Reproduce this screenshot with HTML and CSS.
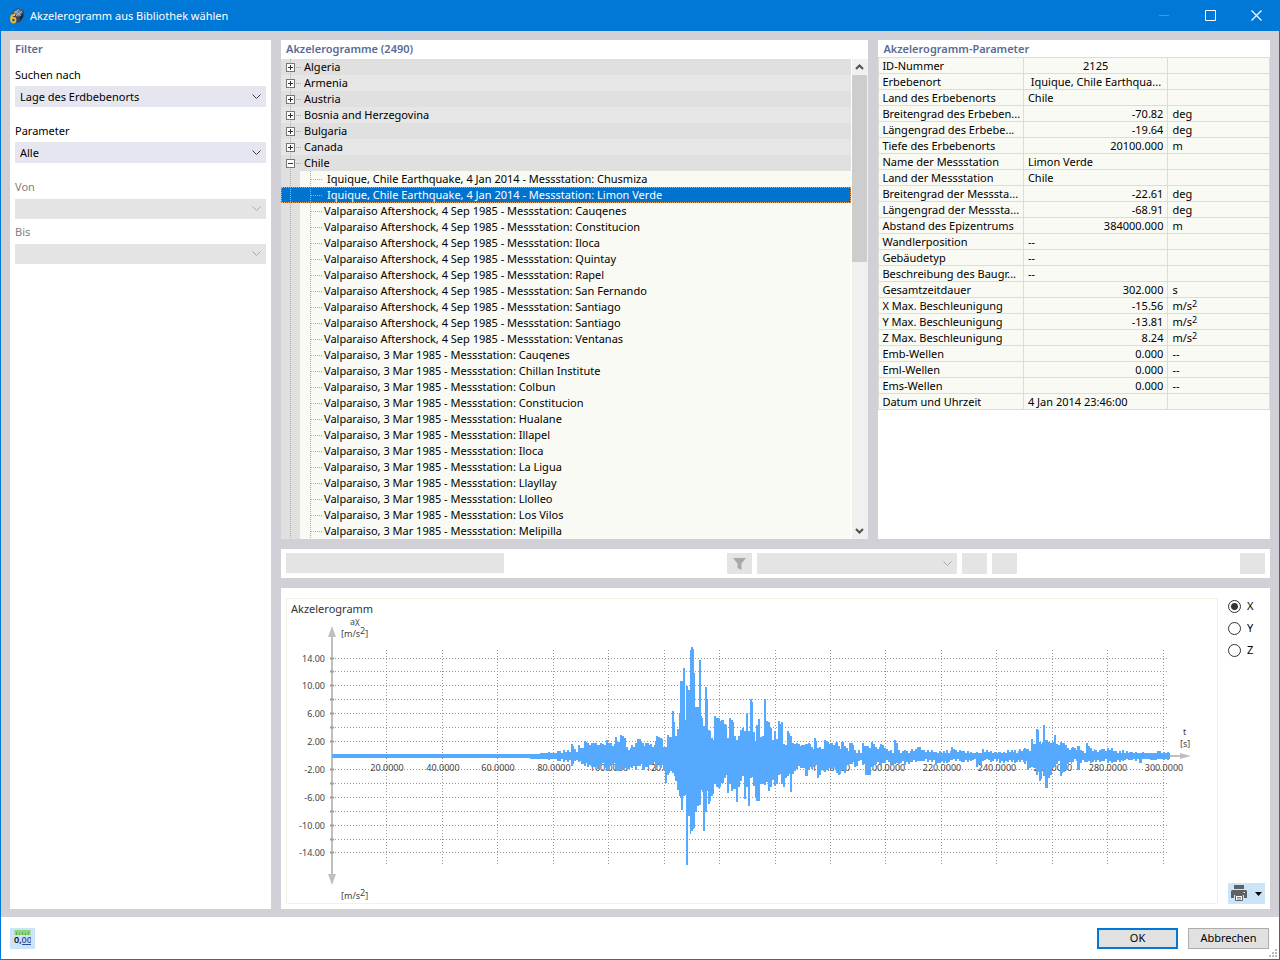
FILE: index.html
```html
<!DOCTYPE html>
<html lang="de">
<head>
<meta charset="utf-8">
<title>Akzelerogramm aus Bibliothek wählen</title>
<link rel="stylesheet" href="styles.css">
</head>
<body>
<div class="window">
  <header class="titlebar">
    <svg class="app-icon" width="16" height="16" viewBox="0 0 16 16" aria-hidden="true">
      <path d="M4 3 9 0l6 3v5l-4 6-5 1-4-5z" fill="#39445c"/>
      <path d="M4 4 9 1l5 3-5 5z" fill="#71809a"/>
      <path d="m5 6 5-5m-3 7 6-5M6 3l6 5" stroke="#b4bfd0" stroke-width=".8"/>
      <path d="M11 9l3-3v3l-3 4z" fill="#1b2436"/>
      <path d="M6 7H4.500Q2 7.500 2 11t2.500 3.500Q6.500 14.500 6.500 12T4.500 10Q3 10 2 11.500" fill="none" stroke="#f5bd2d" stroke-width="1.800"/>
    </svg>
    <h1 class="title">Akzelerogramm aus Bibliothek wählen</h1>
    <button class="win-btn" aria-label="Minimieren" disabled><svg width="11" height="11" viewBox="0 0 11 11"><path d="M0 5.500h10" stroke="#3c98e2"/></svg></button>
    <button class="win-btn" aria-label="Maximieren"><svg width="11" height="11" viewBox="0 0 11 11"><path d="M.5.5h10v10H.5z" fill="none" stroke="#fff"/></svg></button>
    <button class="win-btn" aria-label="Schließen"><svg width="11" height="11" viewBox="0 0 11 11"><path d="m.5.500 10 10m0-10-10 10" stroke="#fff" stroke-width="1.200"/></svg></button>
  </header>

  <main class="workspace">
    <section class="panel filter">
      <h2 class="panel-title">Filter</h2>
      <div class="field">
        <label for="search">Suchen nach</label>
        <select id="search" class="combo"><option>Lage des Erdbebenorts</option></select>
      </div>
      <div class="field">
        <label for="param">Parameter</label>
        <select id="param" class="combo"><option>Alle</option></select>
      </div>
      <div class="field range">
        <label for="from">Von</label>
        <select id="from" class="combo" disabled></select>
      </div>
      <div class="field range">
        <label for="to">Bis</label>
        <select id="to" class="combo" disabled></select>
      </div>
    </section>

    <div class="content">
      <div class="upper">
        <section class="panel">
          <h2 class="panel-title">Akzelerogramme (2490)</h2>
          <div class="tree-wrap">
            <ul class="tree">
              <li class="country"><button class="toggle" aria-label="Algeria öffnen"></button>Algeria</li>
              <li class="country"><button class="toggle" aria-label="Armenia öffnen"></button>Armenia</li>
              <li class="country"><button class="toggle" aria-label="Austria öffnen"></button>Austria</li>
              <li class="country"><button class="toggle" aria-label="Bosnia and Herzegovina öffnen"></button>Bosnia and Herzegovina</li>
              <li class="country"><button class="toggle" aria-label="Bulgaria öffnen"></button>Bulgaria</li>
              <li class="country"><button class="toggle" aria-label="Canada öffnen"></button>Canada</li>
              <li class="country"><button class="toggle open" aria-label="Chile schließen"></button>Chile</li>
              <li class="record new">Iquique, Chile Earthquake, 4 Jan 2014 - Messstation: Chusmiza</li>
              <li class="record new selected">Iquique, Chile Earthquake, 4 Jan 2014 - Messstation: Limon Verde</li>
              <li class="record">Valparaiso Aftershock, 4 Sep 1985 - Messstation: Cauqenes</li>
              <li class="record">Valparaiso Aftershock, 4 Sep 1985 - Messstation: Constitucion</li>
              <li class="record">Valparaiso Aftershock, 4 Sep 1985 - Messstation: Iloca</li>
              <li class="record">Valparaiso Aftershock, 4 Sep 1985 - Messstation: Quintay</li>
              <li class="record">Valparaiso Aftershock, 4 Sep 1985 - Messstation: Rapel</li>
              <li class="record">Valparaiso Aftershock, 4 Sep 1985 - Messstation: San Fernando</li>
              <li class="record">Valparaiso Aftershock, 4 Sep 1985 - Messstation: Santiago</li>
              <li class="record">Valparaiso Aftershock, 4 Sep 1985 - Messstation: Santiago</li>
              <li class="record">Valparaiso Aftershock, 4 Sep 1985 - Messstation: Ventanas</li>
              <li class="record">Valparaiso, 3 Mar 1985 - Messstation: Cauqenes</li>
              <li class="record">Valparaiso, 3 Mar 1985 - Messstation: Chillan Institute</li>
              <li class="record">Valparaiso, 3 Mar 1985 - Messstation: Colbun</li>
              <li class="record">Valparaiso, 3 Mar 1985 - Messstation: Constitucion</li>
              <li class="record">Valparaiso, 3 Mar 1985 - Messstation: Hualane</li>
              <li class="record">Valparaiso, 3 Mar 1985 - Messstation: Illapel</li>
              <li class="record">Valparaiso, 3 Mar 1985 - Messstation: Iloca</li>
              <li class="record">Valparaiso, 3 Mar 1985 - Messstation: La Ligua</li>
              <li class="record">Valparaiso, 3 Mar 1985 - Messstation: Llayllay</li>
              <li class="record">Valparaiso, 3 Mar 1985 - Messstation: Llolleo</li>
              <li class="record">Valparaiso, 3 Mar 1985 - Messstation: Los Vilos</li>
              <li class="record">Valparaiso, 3 Mar 1985 - Messstation: Melipilla</li>
            </ul>
            <div class="scrollbar">
              <button class="scroll-btn" aria-label="Nach oben"><svg width="9" height="6" viewBox="0 0 9 6"><path d="m1 5 3.500-3.500L8 5" fill="none" stroke="#505050" stroke-width="2"/></svg></button>
              <div class="thumb"></div>
              <button class="scroll-btn bottom" aria-label="Nach unten"><svg width="9" height="6" viewBox="0 0 9 6"><path d="m1 1 3.500 3.500L8 1" fill="none" stroke="#505050" stroke-width="2"/></svg></button>
            </div>
          </div>
        </section>

        <section class="panel">
          <h2 class="panel-title">Akzelerogramm-Parameter</h2>
          <table class="params">
            <colgroup><col class="c-name"><col class="c-value"><col></colgroup>
            <tbody>
            <tr><th scope="row">ID-Nummer</th><td class="center">2125</td><td></td></tr>
            <tr><th scope="row">Erbebenort</th><td>&nbsp;Iquique, Chile Earthqua...</td><td></td></tr>
            <tr><th scope="row">Land des Erbebenorts</th><td>Chile</td><td></td></tr>
            <tr><th scope="row">Breitengrad des Erbeben...</th><td class="num">-70.82</td><td>deg</td></tr>
            <tr><th scope="row">Längengrad des Erbebe...</th><td class="num">-19.64</td><td>deg</td></tr>
            <tr><th scope="row">Tiefe des Erbebenorts</th><td class="num">20100.000</td><td>m</td></tr>
            <tr><th scope="row">Name der Messstation</th><td>Limon Verde</td><td></td></tr>
            <tr><th scope="row">Land der Messstation</th><td>Chile</td><td></td></tr>
            <tr><th scope="row">Breitengrad der Messsta...</th><td class="num">-22.61</td><td>deg</td></tr>
            <tr><th scope="row">Längengrad der Messsta...</th><td class="num">-68.91</td><td>deg</td></tr>
            <tr><th scope="row">Abstand des Epizentrums</th><td class="num">384000.000</td><td>m</td></tr>
            <tr><th scope="row">Wandlerposition</th><td>--</td><td></td></tr>
            <tr><th scope="row">Gebäudetyp</th><td>--</td><td></td></tr>
            <tr><th scope="row">Beschreibung des Baugr...</th><td>--</td><td></td></tr>
            <tr><th scope="row">Gesamtzeitdauer</th><td class="num">302.000</td><td>s</td></tr>
            <tr><th scope="row">X Max. Beschleunigung</th><td class="num">-15.56</td><td>m/s<sup>2</sup></td></tr>
            <tr><th scope="row">Y Max. Beschleunigung</th><td class="num">-13.81</td><td>m/s<sup>2</sup></td></tr>
            <tr><th scope="row">Z Max. Beschleunigung</th><td class="num">8.24</td><td>m/s<sup>2</sup></td></tr>
            <tr><th scope="row">Emb-Wellen</th><td class="num">0.000</td><td>--</td></tr>
            <tr><th scope="row">Eml-Wellen</th><td class="num">0.000</td><td>--</td></tr>
            <tr><th scope="row">Ems-Wellen</th><td class="num">0.000</td><td>--</td></tr>
            <tr><th scope="row">Datum und Uhrzeit</th><td>4 Jan 2014 23:46:00</td><td></td></tr>
            </tbody>
          </table>
        </section>
      </div>

      <section class="panel toolbar">
        <div class="tool-group">
          <input class="search-box" type="text" aria-label="Suche" disabled>
          <button class="tool" aria-label="Filtern" disabled><svg width="13" height="12" viewBox="0 0 13 12"><path d="M0 0h13L8.500 5.500V12l-4-2V5.500z" fill="#a9a9a9"/></svg></button>
        </div>
        <select class="combo tool-combo" aria-label="Filterauswahl" disabled></select>
        <button class="tool" aria-label="Aktion 1" disabled></button>
        <button class="tool" aria-label="Aktion 2" disabled></button>
        <button class="tool last" aria-label="Aktion 3" disabled></button>
      </section>

      <section class="panel diagram">
        <div class="plot">
          <svg class="plot-svg" viewBox="0 0 930 304" role="img" aria-label="Akzelerogramm">
            <text class="plot-title" x="4" y="14">Akzelerogramm</text>
            <g id="grid" class="grid"></g>
            <g class="axis">
              <path d="M45 34v246M45 157h848"/>
              <path id="ticks" class="ticks"/>
              <path class="arrow" d="m45 27 4 11h-8zM45 286l4-11h-8zM904 157l-11-3v6z"/>
            </g>
            <g id="labels" class="labels"></g>
            <g class="labels">
              <text x="63" y="26">a<tspan class="small" dy="1">X</tspan></text>
              <text x="54" y="38">[m/s<tspan dy="-3">2</tspan><tspan dy="3">]</tspan></text>
              <text x="54" y="300">[m/s<tspan dy="-3">2</tspan><tspan dy="3">]</tspan></text>
              <text x="896" y="136">t</text>
              <text x="893" y="148">[s]</text>
            </g>
            <path id="wave" class="wave"/>
          </svg>
        </div>
        <div class="side">
          <div class="radios">
            <label class="radio"><input type="radio" name="axis" checked>X</label>
            <label class="radio"><input type="radio" name="axis">Y</label>
            <label class="radio"><input type="radio" name="axis">Z</label>
          </div>
          <button class="print" aria-label="Drucken">
            <svg width="16" height="17" viewBox="0 0 16 17"><path d="M3 0h10v4H3zM1 5h14l1 1v7h-3v-3H3v3H0V6z" fill="#5d6267"/><path d="M12.500 7h1.500v1h-1.500z" fill="#fff"/><path d="M4.500 10.500h7v5h-7z" fill="#fff" stroke="#5d6267"/><path d="M6 12.500h4M6 14h4" stroke="#5d6267" stroke-width=".8"/></svg>
            <svg width="7" height="4" viewBox="0 0 7 4"><path d="M0 0h7L3.500 4z"/></svg>
          </button>
        </div>
      </section>
    </div>
  </main>

  <footer class="footer">
    <button class="units" aria-label="Einheiten und Dezimalstellen">
      <svg width="17" height="16" viewBox="0 0 17 16"><path d="M.5 0h16v5H.5z" fill="#8bd67a"/><path d="M2.500 2v3m3-2v2m3-3v3m3-2v2m3-3v3" stroke="#56a04a" stroke-width=".8"/><text class="unit-text" x="0" y="13">0,<tspan fill="#2b4f9e">00</tspan></text><path d="M8 14.500h9" stroke="#2b4f9e"/></svg>
    </button>
    <button class="btn primary">OK</button>
    <button class="btn">Abbrechen</button>
    <svg class="grip" width="8" height="8" viewBox="0 0 8 8" aria-hidden="true"><path d="M6 0h2v2H6zM3 3h2v2H3zM6 3h2v2H6zM0 6h2v2H0zM3 6h2v2H3zM6 6h2v2H6z" fill="#bdbdbd"/></svg>
  </footer>
</div>
<script src="chart.js"></script>
</body>
</html>
```
FILE: styles.css
```css
* { box-sizing: border-box; }

body {
  margin: 0;
  font: 11px/16px "Noto Sans", "Open Sans", sans-serif;
  color: #000;
}

button, select, input { font: inherit; color: inherit; margin: 0; border-radius: 0; }
button { padding: 0; border: 0; background: none; display: flex; align-items: center; justify-content: center; }
h1, h2, ul { margin: 0; padding: 0; }

.window {
  min-height: 100vh;
  display: flex;
  flex-direction: column;
  border: 1px solid #0078d7;
  border-top: 0;
  background: #fff;
}

.titlebar { height: 31px; display: flex; align-items: center; background: #0078d7; color: #fff; }
.app-icon { margin: 0 5px 0 8px; }
.title { flex: 1; font-size: 11px; font-weight: 400; }
.win-btn { width: 46px; height: 31px; }

.workspace {
  flex: 1;
  display: grid;
  grid-template-columns: 261px minmax(0, 1fr);
  gap: 10px;
  padding: 9px 9px 8px;
  background: #d1d0d6;
}
.content { display: flex; flex-direction: column; gap: 10px; }
.upper { flex: 1; display: grid; grid-template-columns: minmax(0, 3fr) minmax(0, 2fr); gap: 10px; }
.panel { background: #fff; }
.panel-title { padding: 1px 5px 2px; font-size: 11px; line-height: 16px; font-weight: 600; color: #5a6b96; }

/* Filter */
.filter .panel-title { margin-bottom: 8px; }
.field { display: flex; flex-direction: column; gap: 3px; padding: 0 5px; margin-bottom: 16px; }
.range { margin-bottom: 5px; gap: 4px; color: #808080; }
.combo {
  appearance: none;
  height: 21px;
  border: 0;
  padding: 0 5px;
  background: #e6e6f1 url("data:image/svg+xml,%3Csvg xmlns='http://www.w3.org/2000/svg' width='9' height='6'%3E%3Cpath d='m.5.5 4 4 4-4' fill='none' stroke='%23444'/%3E%3C/svg%3E") no-repeat right 5px center;
}
.combo:disabled {
  opacity: 1;
  background: #e4e4e4 url("data:image/svg+xml,%3Csvg xmlns='http://www.w3.org/2000/svg' width='9' height='6'%3E%3Cpath d='m.5.5 4 4 4-4' fill='none' stroke='%23a8a8a8'/%3E%3C/svg%3E") no-repeat right 5px center;
}
.range .combo { height: 20px; }

/* Tree */
.tree-wrap { display: flex; gap: 1px; }
.tree { flex: 1; min-width: 0; list-style: none; }
.tree li { height: 16px; white-space: nowrap; overflow: hidden; }
.country {
  display: flex;
  align-items: center;
  padding-left: 5px;
  background:
    repeating-linear-gradient(#aaa 0 1px, transparent 1px 2px) 9px 0 / 1px 100% no-repeat,
    repeating-linear-gradient(90deg, #aaa 0 1px, transparent 1px 2px) 15px 8px / 5px 1px no-repeat;
  background-color: #e6e6e6;
}
.country:nth-child(odd) { background-color: #e0e0e0; }
.toggle {
  flex: none;
  width: 9px;
  height: 9px;
  margin-right: 9px;
  border: 1px solid #777;
  background:
    linear-gradient(#333, #333) center / 5px 1px no-repeat,
    linear-gradient(#333, #333) center / 1px 5px no-repeat,
    #fff;
}
.toggle.open { background: linear-gradient(#333, #333) center / 5px 1px no-repeat, #fff; }
.record {
  padding-left: 43px;
  background:
    repeating-linear-gradient(#aaa 0 1px, transparent 1px 2px) 9px 0 / 1px 100% no-repeat,
    repeating-linear-gradient(#aaa 0 1px, transparent 1px 2px) 29px 0 / 1px 100% no-repeat,
    repeating-linear-gradient(90deg, #aaa 0 1px, transparent 1px 2px) 30px 8px / 11px 1px no-repeat,
    linear-gradient(#e0e0e0, #e0e0e0) 0 0 / 19px 100% no-repeat,
    #f9faf3;
}
.record.new { padding-left: 46px; }
.record.selected {
  color: #fff;
  outline: 1px dotted #e8a05c;
  outline-offset: -1px;
  background:
    repeating-linear-gradient(#8cb8e4 0 1px, transparent 1px 2px) 9px 0 / 1px 100% no-repeat,
    repeating-linear-gradient(#8cb8e4 0 1px, transparent 1px 2px) 29px 0 / 1px 100% no-repeat,
    repeating-linear-gradient(90deg, #8cb8e4 0 1px, transparent 1px 2px) 30px 8px / 11px 1px no-repeat,
    #0073cf;
}
.scrollbar { width: 16px; display: flex; flex-direction: column; background: #f0f0f0; }
.scroll-btn { width: 15px; height: 16px; }
.thumb { width: 15px; height: 187px; background: #cdcdcd; }
.bottom { margin-top: auto; }

/* Parameter table */
.params { width: 100%; border-collapse: collapse; table-layout: fixed; background: #f9faf3; margin-top: -2px; }
.c-name { width: 37%; }
.c-value { width: 37%; }
.params th, .params td {
  height: 16px;
  padding: 0 4px;
  border: 1px solid #dcdcdc;
  line-height: 15px;
  font-weight: 400;
  text-align: left;
  white-space: nowrap;
  overflow: hidden;
}
.params th { padding-left: 3px; padding-right: 0; }
.params .num { text-align: right; }
.params .center { text-align: center; }
.params sup { font-size: 9px; line-height: 0; vertical-align: 3px; }

/* Toolbar */
.toolbar { display: flex; gap: 5px; padding: 4px 5px; }
.tool-group { flex: 0 0 466px; display: flex; justify-content: space-between; }
.search-box { width: 218px; height: 20px; border: 0; background: #e4e4e4; }
.tool { width: 25px; height: 21px; background: #e4e4e4; }
.tool-combo { width: 200px; }
.last { margin-left: auto; }

/* Diagram */
.diagram { display: flex; padding: 10px 5px 5px; gap: 10px; }
.plot { flex: 1; min-width: 0; border: 1px solid #f4f1e4; }
.plot-svg { display: block; width: 100%; height: auto; }
.plot-title { font-size: 11px; fill: #333; }
.grid { stroke: #999; stroke-dasharray: 1 2; fill: none; }
.axis { stroke: #bfbfbf; stroke-width: 2; fill: none; }
.ticks { stroke: #a0a0a0; }
.arrow { fill: #bfbfbf; stroke: none; }
.labels { font-size: 9px; fill: #444; }
.small { font-size: 8px; }
.end { text-anchor: end; }
.mid { text-anchor: middle; }
.wave { fill: #55aaff; }
.side { width: 37px; display: flex; flex-direction: column; justify-content: space-between; }
.radios { display: flex; flex-direction: column; gap: 6px; }
.radio { display: flex; align-items: center; gap: 6px; }
.radio input {
  appearance: none;
  width: 13px;
  height: 13px;
  border: 1px solid #333;
  border-radius: 50%;
  background: #fff;
}
.radio input:checked { background: radial-gradient(circle, #333 0 3px, #fff 4px); }
.print { width: 37px; height: 21px; gap: 8px; background: #cce4f7; }

/* Footer */
.footer { position: relative; display: flex; align-items: center; gap: 10px; height: 42px; padding: 0 10px 0 9px; }
.units { width: 25px; height: 21px; margin-right: auto; background: #cce4f7; }
.unit-text { font: 600 9px "Open Sans", sans-serif; }
.btn { width: 81px; height: 21px; border: 1px solid #adadad; background: #e1e1e1; }
.primary { border: 2px solid #0078d7; }
.grip { position: absolute; right: 2px; bottom: 2px; }
```
FILE: chart.js
```js
// Envelope of the recorded signal: [x, amplitude above the axis, amplitude below].
const envelope = [
  [45,2,2],[243,2,3],[253,3,3],[261,4,4],[270,5,5],[276,6,6],[284,12,10],[287,7,5],[291,11,6],
  [294,8,8],[297,15,10],[300,13,11],[306,13,11],[310,11,13],[313,13,10],[317,11,12],[319,16,15],
  [323,13,10],[328,19,14],[330,14,15],[333,21,13],[339,9,14],[344,11,12],[348,13,14],[350,17,10],
  [355,13,14],[358,13,11],[363,12,9],[368,15,14],[369,20,11],[373,18,12],[376,9,14],[378,9,27],
  [380,21,19],[383,19,15],[385,45,17],[387,34,20],[388,20,25],[390,27,34],[392,43,40],[393,75,42],
  [394,75,54],[396,88,40],[398,36,39],[399,70,109],[401,66,60],[403,106,78],[404,109,75],
  [407,83,72],[408,49,56],[410,49,50],[412,96,49],[414,40,34],[415,38,36],[416,30,75],[418,69,56],
  [420,56,35],[421,26,48],[424,18,40],[427,40,28],[429,38,31],[431,38,32],[434,36,27],[437,32,22],
  [440,18,37],[442,38,28],[444,36,35],[447,20,33],[449,16,46],[451,20,31],[453,26,25],[455,28,20],
  [457,25,43],[459,43,31],[461,25,50],[463,57,22],[466,24,30],[468,15,41],[469,31,45],[471,37,45],
  [473,19,28],[475,20,28],[477,57,29],[479,35,26],[481,34,35],[483,28,31],[485,16,24],[487,25,30],
  [489,17,28],[491,35,19],[494,34,28],[496,12,31],[498,11,22],[500,25,20],[503,20,36],[505,13,18],
  [509,13,13],[514,11,12],[518,12,20],[521,13,14],[524,9,13],[527,18,10],[530,8,22],[532,9,19],
  [534,7,14],[537,16,16],[540,14,14],[544,13,13],[549,14,17],[551,10,19],[554,14,14],[557,10,17],
  [559,8,9],[562,13,8],[567,6,11],[571,6,5],[575,13,9],[578,10,19],[582,8,19],[584,14,11],
  [588,9,8],[593,12,10],[597,8,7],[603,6,9],[607,16,8],[611,6,8],[617,6,9],[624,7,6],[630,9,5],
  [634,6,5],[640,6,6],[648,4,9],[652,5,7],[659,6,7],[664,9,4],[668,6,5],[674,5,6],[683,4,5],
  [689,4,11],[695,7,5],[703,5,6],[712,4,7],[720,6,6],[727,6,7],[732,7,6],[737,8,8],[740,7,14],
  [744,17,11],[746,12,12],[749,27,19],[752,14,25],[755,14,14],[756,31,20],[758,16,32],[761,14,22],
  [765,14,12],[767,21,11],[769,12,8],[773,14,20],[776,13,16],[780,8,8],[785,9,6],[790,10,14],
  [793,6,7],[799,13,6],[803,8,7],[808,6,6],[814,7,5],[820,8,7],[826,5,6],[835,6,5],[842,4,4],
  [848,4,5],[852,3,7],[855,4,3],[863,3,4],[870,5,3],[876,4,4],[882,3,3],[883,0,0]
];
const axisY = 157;
const upper = [];
const lower = [];
for (let i = 0; i < envelope.length - 1; i++) {
  const [x, up, down] = envelope[i];
  const next = envelope[i + 1][0];
  for (let px = x; px < next; px += 2) {
    const end = Math.min(px + 2, next);
    const noisy = px > x && up > 3;
    const u = noisy ? Math.max(3, up - (px * 7) % 4) : up;
    const d = noisy ? Math.max(3, down - (px * 5) % 4) : down;
    upper.push(`${px} ${axisY - u}L${end} ${axisY - u}`);
    lower.unshift(`${end} ${axisY + d}L${px} ${axisY + d}`);
  }
}
document.getElementById("wave").setAttribute("d", `M${upper.join("L")}L${lower.join("L")}Z`);

let grid = "";
let labels = "";
let ticks = "";
for (let v = -14; v <= 14; v += 2) {
  if (v === 0) continue;
  const y = Math.round(axisY - v * 6.96);
  grid += `<path d="M45 ${y - 0.5}H880"/>`;
  ticks += `M43 ${y - 0.5}h4`;
  if (Math.abs(v) % 4 === 2) {
    labels += `<text class="end" x="38" y="${y + 3}">${v.toFixed(2)}</text>`;
  }
}
for (let t = 20; t <= 300; t += 20) {
  const x = Math.round(45 + t * 2.772);
  grid += `<path d="M${x - 0.5} 51V267"/>`;
  labels += `<text class="mid" x="${x}" y="172">${t.toFixed(4)}</text>`;
}
document.getElementById("grid").innerHTML = grid;
document.getElementById("labels").innerHTML = labels;
document.getElementById("ticks").setAttribute("d", ticks);
```
